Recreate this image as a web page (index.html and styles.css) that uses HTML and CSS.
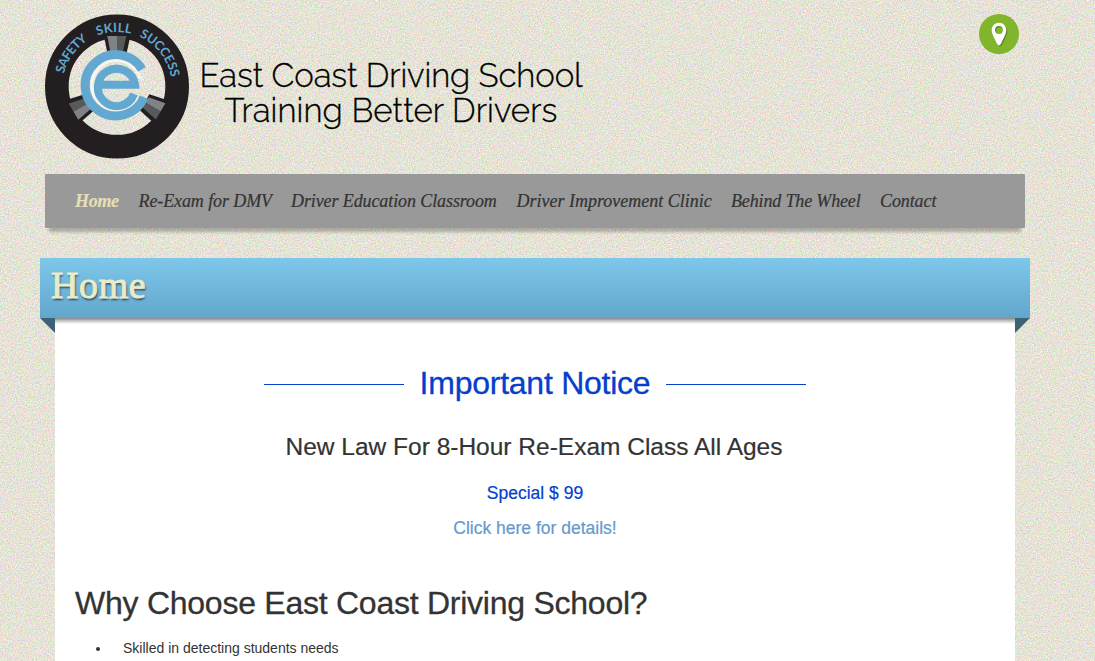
FILE: index.html
```html
<!DOCTYPE html>
<html lang="en">
<head>
<meta charset="utf-8">
<title>East Coast Driving School</title>
<link rel="stylesheet" href="styles.css">
</head>
<body>
<svg class="texture" aria-hidden="true">
  <filter id="grain" x="0" y="0" width="100%" height="100%" color-interpolation-filters="sRGB">
    <feTurbulence type="fractalNoise" baseFrequency="0.72" numOctaves="3" seed="4"/>
    <feColorMatrix values=".36 0 0 0 .72  0 .36 0 0 .71  0 0 .36 0 .66  0 0 0 0 1"/>
  </filter>
  <rect width="100%" height="100%" filter="url(#grain)"/>
</svg>
<div class="page">
  <header class="header">
    <svg class="logo" viewBox="30 27 432 435" role="img" aria-label="Safety Skill Success">
      <defs>
        <path id="arc" d="M82 245A164 164 0 0 1 410 245"/>
        <g id="spoke">
          <path fill="#231f20" d="M207 94L286 94L274 148H218Z"/>
          <path fill="#808285" d="M217 93H246V145H227Z"/>
          <path fill="#58595b" d="M246 93H274L263 145H246Z"/>
        </g>
      </defs>
      <circle class="tire" cx="246" cy="244.500" r="180.500"/>
      <use href="#spoke"/>
      <use href="#spoke" transform="rotate(120 246 244)"/>
      <use href="#spoke" transform="rotate(-120 246 244)"/>
      <path class="mark-gap" d="M316 221A74 74 0 1 0 309 277"/>
      <path class="mark-c" d="M321 193A92 92 0 1 0 327 277"/>
      <path class="mark-e" d="M200 239H300A56 56 0 1 0 297 267"/>
      <g class="motto">
        <text><textPath href="#arc" startOffset="39" textLength="126">SAFETY</textPath></text>
        <text><textPath href="#arc" startOffset="198" textLength="101">SKILL</textPath></text>
        <text><textPath href="#arc" startOffset="326" textLength="161">SUCCESS</textPath></text>
      </g>
    </svg>
    <div class="brand"><span class="brand-name">East Coast Driving School</span><span class="brand-tag">Training Better Drivers</span></div>
    <a class="pin" href="#" aria-label="Location">
      <svg viewBox="0 0 40 40"><path fill-rule="evenodd" d="M20 8.700C24.400 8.700 27.300 12 27.300 16C27.300 20.500 24 25 22 29.800Q20 33 18 29.800C16 25 12.700 20.500 12.700 16C12.700 12 15.600 8.700 20 8.700ZM20 12.100A3.900 3.900 0 1 0 20 19.900A3.900 3.900 0 1 0 20 12.100Z"/></svg>
    </a>
  </header>
  <nav class="nav">
    <a class="active w1" href="#">Home</a>
    <a class="w2" href="#">Re-Exam for DMV</a>
    <a class="w3" href="#">Driver Education Classroom</a>
    <a class="w4" href="#">Driver Improvement Clinic</a>
    <a class="w5" href="#">Behind The Wheel</a>
    <a class="w6" href="#">Contact</a>
  </nav>
  <div class="banner"><h1>Home</h1></div>
  <main class="content">
    <div class="notice"><span class="rule"></span><h2>Important Notice</h2><span class="rule"></span></div>
    <h3>New Law For 8-Hour Re-Exam Class All Ages</h3>
    <p class="special">Special $ 99</p>
    <p class="details"><a href="#">Click here for details!</a></p>
    <h2 class="why">Why Choose East Coast Driving School?</h2>
    <ul><li>Skilled in detecting students needs</li></ul>
  </main>
</div>
</body>
</html>
```
FILE: styles.css
```css
* { box-sizing: border-box; }
body { margin: 0; height: 661px; overflow: hidden; background: #e2ded4; color: #333; font-family: "Liberation Sans", Arial, sans-serif; }
a { text-decoration: none; color: inherit; }
h1, h2, h3, p, ul { margin: 0; font-weight: 400; }
.texture { position: absolute; inset: 0; width: 100%; height: 100%; z-index: -1; }
.page { width: 990px; margin-left: 40px; padding-top: 14px; }
.header { display: flex; align-items: flex-start; height: 160px; padding: 0 11px 0 5px; }
.logo { width: 144px; height: 145px; flex: none; }
.tire { fill: none; stroke: #231f20; stroke-width: 71; }
.mark-c, .mark-e, .mark-gap { fill: none; stroke: #62a8d1; stroke-width: 27; }
.mark-e { stroke-width: 24; }
.mark-gap { stroke: #f7f5f2; stroke-width: 9; }
.motto { font: 700 38px Lato, sans-serif; fill: #62a8d1; }
.brand { display: flex; flex-direction: column; width: 384px; margin: 44px 0 0 10px; align-items: center; white-space: nowrap; font: 300 33px/35px Raleway, Lato, sans-serif; color: #000; -webkit-text-stroke: .3px; }
.brand-name { letter-spacing: -.1px; }
.brand-tag { letter-spacing: .1px; }
.pin { width: 40px; height: 40px; margin-left: auto; border-radius: 50%; background: #80b52c; }
.pin svg { display: block; fill: #fff; filter: drop-shadow(1px 1px .5px rgba(0,0,0,.3)); }
.nav { position: relative; display: flex; gap: 19.500px; height: 54px; margin: 0 5px; padding: 0 30px; align-items: center; background: #999; border-radius: 1px; white-space: nowrap; font: italic 18px/54px Georgia, "Liberation Serif", serif; color: #333; box-shadow: 0 8px 3px -4px rgba(0,0,0,.25); }
.nav a { flex: none; -webkit-text-stroke: .2px; }
.nav .active { color: #e6dfb5; font-weight: 700; letter-spacing: -.3px; }
.w1 { width: 44px; }
.w2 { width: 133px; letter-spacing: -.1px; }
.w3 { width: 206px; letter-spacing: -.1px; }
.w4 { width: 195px; }
.w5 { width: 129.500px; letter-spacing: -.15px; }
.w6 { width: 56px; letter-spacing: -.1px; }
.banner { position: relative; height: 60px; margin-top: 30px; padding-left: 11px; background: linear-gradient(#7ec7eb, #62a6cb); }
.banner::before, .banner::after { content: ""; position: absolute; top: 60px; width: 15px; height: 15px; background: #3e6175; }
.banner::before { left: 0; clip-path: polygon(0 0, 100% 0, 100% 100%); }
.banner::after { right: 0; clip-path: polygon(0 0, 100% 0, 0 100%); }
.banner h1 { font: 38px/55px Georgia, "Liberation Serif", serif; letter-spacing: .6px; color: #ebebc9; -webkit-text-stroke: 1px #ebebc9; text-shadow: 1px 2px 2px rgba(0,0,0,.65); }
.content { height: 343px; margin: 0 15px; padding: 45px 20px 0; background: linear-gradient(#868686, #c8c8c8 3px, #fff 6px); text-align: center; }
.notice { display: flex; justify-content: center; align-items: center; gap: 16px; height: 40px; color: #0540cc; }
.notice h2 { font-size: 32px; line-height: 40px; letter-spacing: -.25px; -webkit-text-stroke: .3px; }
.rule { width: 140px; height: 1px; margin-top: 2px; background: #0540cc; }
h3 { margin: 27px 2px 0 0; font-size: 24.500px; line-height: 34px; -webkit-text-stroke: .2px; }
.special, .details { font-size: 17.500px; line-height: 24px; -webkit-text-stroke: .2px; }
.special { margin-top: 17px; color: #0540cc; }
.details { margin-top: 11px; color: #6699cc; }
.why { margin-top: 43px; text-align: left; font-size: 32px; line-height: 40px; letter-spacing: -.25px; -webkit-text-stroke: .3px; }
ul { list-style: none; padding-left: 21px; margin-top: 15px; text-align: left; font-size: 14px; line-height: 20px; }
li { display: flex; align-items: center; }
li::before { content: ""; width: 4px; height: 4px; margin: 2px 23px 0 0; border-radius: 50%; background: #333; }
```
